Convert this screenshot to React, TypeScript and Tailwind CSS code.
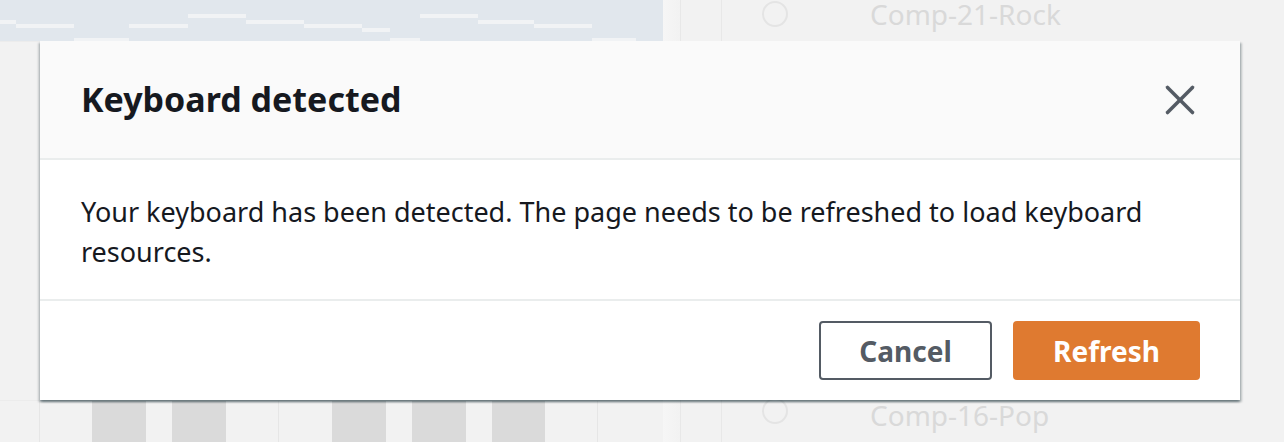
import { X } from "lucide-react";

// note bars in the piano roll strip: [left, width, top]
const notes: [number, number, number][] = [
	[0, 16, 20],
	[16, 58, 24],
	[74, 55, 38],
	[129, 59, 24],
	[188, 58, 14],
	[246, 58, 20],
	[304, 58, 24],
	[362, 28, 28],
	[390, 30, 38],
	[420, 58, 14],
	[478, 56, 20],
	[534, 58, 24],
	[592, 44, 38],
];

const Background = () => (
	<div className="flex h-[442px] w-[1284px] bg-[#f2f2f2]">
		<div className="flex w-[663px] flex-col">
			<div className="relative h-[41px] bg-[#e1e7ed]">
				{notes.map(([l, w, t], i) => (
					<div
						key={i}
						className="absolute h-[4px] bg-[#f1f3f5]"
						style={{ left: l, width: w, top: t }}
					/>
				))}
			</div>
			<div className="flex-1 border-t border-[#ececec]" />
			<div className="flex h-[42px] border-t border-[#ececec]">
				<div className="w-[40px] border-r border-[#e6e6e6]" />
				<div className="w-[52px]" />
				<div className="w-[54px] bg-[#dadada]" />
				<div className="w-[26px]" />
				<div className="w-[54px] bg-[#dadada]" />
				<div className="w-[53px] border-r border-[#e6e6e6]" />
				<div className="w-[53px]" />
				<div className="w-[54px] bg-[#dadada]" />
				<div className="w-[26px]" />
				<div className="w-[54px] bg-[#dadada]" />
				<div className="w-[26px]" />
				<div className="w-[53px] bg-[#dadada]" />
				<div className="w-[53px] border-r border-[#e6e6e6]" />
			</div>
		</div>
		<div className="w-[18px] bg-gradient-to-r from-[#f6f6f6] to-[#f2f2f2] border-r border-[#e8e8e8]" />
		<div className="w-[41px] border-r border-[#e8e8e8]" />
		<div className="flex flex-1 flex-col justify-between">
			<div className="flex h-[28px] items-center gap-[82px] pl-[40px]">
				<div className="h-[26px] w-[26px] rounded-full border-2 border-[#e4e4e4]" />
				<span className="text-[28px] leading-[28px] text-[#d9d9d9]">Comp-21-Rock</span>
			</div>
			<div className="flex h-[42px] items-start gap-[82px] pl-[40px]">
				<div className="mt-[-2px] h-[26px] w-[26px] rounded-full border-2 border-[#e4e4e4]" />
				<span className="-mt-[3px] text-[28px] leading-[36px] text-[#d9d9d9]">Comp-16-Pop</span>
			</div>
		</div>
	</div>
);

export default function App() {
	return (
		<div
			className="relative h-[442px] w-[1284px] overflow-hidden"
			style={{ fontFamily: '"Noto Sans", "Open Sans", sans-serif' }}
		>
			<Background />

			{/* modal */}
			<div className="absolute left-[40px] top-[41px] w-[1200px] bg-white shadow-[0_2px_2px_rgba(0,28,36,0.35),2px_2px_2px_rgba(0,28,36,0.2),-2px_2px_2px_rgba(0,28,36,0.15)]">
				<div className="flex h-[119px] items-center justify-between border-b-2 border-[#eaeded] bg-[#fafafa] pl-[41px] pr-[35px]">
					<h2 className="text-[34px] font-bold text-[#16191f]">Keyboard detected</h2>
					<X className="h-[50px] w-[50px] text-[#545b64]" strokeWidth={1.7} />
				</div>
				<div className="h-[141px] border-b-2 border-[#eaeded] px-[41px] pt-[32px] text-[27px] leading-[40px] text-[#16191f]">
					Your keyboard has been detected. The page needs to be refreshed to load keyboard resources.
				</div>
				<div className="flex h-[99px] items-center justify-end gap-[21px] pr-[40px]">
					<button className="h-[59px] w-[173px] rounded-[4px] border-2 border-[#545b64] bg-white text-[28px] font-bold text-[#545b64]">
						Cancel
					</button>
					<button className="h-[59px] w-[187px] rounded-[4px] bg-[#df7a30] text-[28px] font-bold text-white">
						Refresh
					</button>
				</div>
			</div>
		</div>
	);
}
